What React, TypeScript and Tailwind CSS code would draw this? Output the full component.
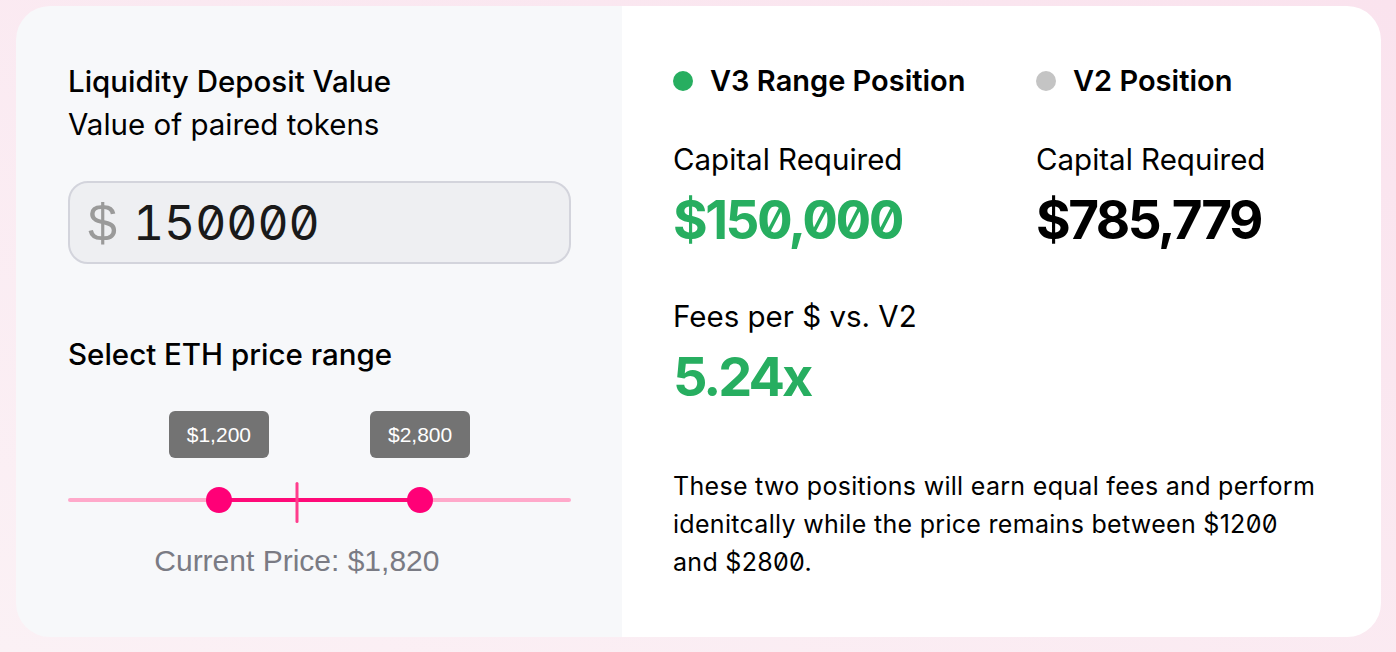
import { useState } from 'react';

const MIN = 0;
const MAX = 4000;

const pct = (v: number) => ((v - MIN) / (MAX - MIN)) * 100;

function fmt(n: number) {
  return '$' + n.toLocaleString('en-US');
}

function RangeSlider({ low, high, current }: { low: number; high: number; current: number }) {
  return (
    <div className="relative w-[503px] h-[170px]">
      {/* tooltips */}
      {[low, high].map(v => (
        <div
          key={v}
          className="absolute top-0 -translate-x-1/2 w-[100px] h-[47px] rounded-[6px] bg-[#737373] text-white flex items-center justify-center text-[21px] font-['Liberation_Sans',sans-serif]"
          style={{ left: `${pct(v)}%` }}
        >
          {fmt(v)}
        </div>
      ))}

      {/* track */}
      <div className="absolute left-0 right-0 top-[87px] h-[4px] rounded-full bg-[#ffa9ca]" />
      <div
        className="absolute top-[87px] h-[4px] bg-[#ff0a78]"
        style={{ left: `${pct(low)}%`, width: `${pct(high) - pct(low)}%` }}
      />
      {/* current price tick */}
      <div
        className="absolute top-[71px] h-[41px] w-[3px] -translate-x-1/2 rounded-full bg-[#ff3d8c]"
        style={{ left: `${pct(current)}%` }}
      />
      {/* thumbs */}
      {[low, high].map(v => (
        <div
          key={v}
          className="absolute top-[76px] w-[26px] h-[26px] -translate-x-1/2 rounded-full bg-[#ff0077]"
          style={{ left: `${pct(v)}%` }}
        />
      ))}

      <div
        className="absolute top-[133px] -translate-x-1/2 whitespace-nowrap text-[30px] leading-[34px] text-[#7a7b84] font-['Liberation_Sans',sans-serif]"
        style={{ left: `${pct(current)}%` }}
      >
        Current Price: {fmt(current)}
      </div>
    </div>
  );
}

export default function App() {
  const [value, setValue] = useState('150000');
  const low = 1200;
  const high = 2800;
  const current = 1820;

  return (
    <div className="w-[1396px] h-[652px] bg-gradient-to-tr from-[#fbf1f5] to-[#fae3ee] pt-[6px] pl-[16px] font-['Inter',sans-serif] text-black">
      <div className="w-[1365px] h-[631px] rounded-[34px] overflow-hidden flex">
        {/* left */}
        <div className="w-[606px] shrink-0 bg-[#f7f8fa] pl-[52px] pt-[54px]">
          <h2 className="text-[29.5px] leading-[43px] font-medium">Liquidity Deposit Value</h2>
          <p className="text-[29.5px] leading-[43px]">Value of paired tokens</p>

          <div className="mt-[35px] w-[503px] h-[83px] rounded-[20px] border-2 border-[#d3d4dc] bg-[#eeeff2] flex items-center pl-[18px]">
            <span className="text-[52px] leading-none text-[#9a9a9a] font-['Liberation_Sans',sans-serif]">$</span>
            <input
              value={value}
              onChange={e => setValue(e.target.value)}
              className="ml-[16px] w-[380px] bg-transparent outline-none text-[48px] text-[#1a1a1a] slashed-zero tabular-nums font-['Inter',sans-serif]"
            />
          </div>

          <h2 className="mt-[69px] text-[29.5px] leading-[43px] font-medium">Select ETH price range</h2>

          <div className="mt-[35px]">
            <RangeSlider low={low} high={high} current={current} />
          </div>
        </div>

        {/* right */}
        <div className="flex-1 min-w-0 bg-white pl-[51px] pt-[55px]">
          <div className="grid grid-cols-[363px_1fr]">
            <div>
              <div className="flex items-center gap-[17px]">
                <span className="w-[20px] h-[20px] rounded-full bg-[#27ae60]" />
                <span className="text-[29px] leading-[40px] font-semibold">V3 Range Position</span>
              </div>
              <div className="mt-[38px] text-[29.5px] leading-[40px]">Capital Required</div>
              <div className="mt-[11px] text-[53px] leading-[60px] font-bold text-[#27ae60] slashed-zero tracking-[-2.5px]">
                $150,000
              </div>
            </div>
            <div>
              <div className="flex items-center gap-[17px]">
                <span className="w-[20px] h-[20px] rounded-full bg-[#c4c4c4]" />
                <span className="text-[29px] leading-[40px] font-semibold">V2 Position</span>
              </div>
              <div className="mt-[38px] text-[29.5px] leading-[40px]">Capital Required</div>
              <div className="mt-[11px] text-[53px] leading-[60px] font-bold slashed-zero tracking-[-2.5px]">
                $785,779
              </div>
            </div>
          </div>

          <div className="mt-[46px] text-[29.5px] leading-[40px]">Fees per $ vs. V2</div>
          <div className="mt-[11px] text-[54px] leading-[60px] font-bold text-[#27ae60] tracking-[-3px]">5.24x</div>

          <p className="mt-[60px] w-[648px] text-[25px] leading-[38px] tracking-[0.3px] slashed-zero">
            These two positions will earn equal fees and perform idenitcally while the price remains between $1200 and $2800.
          </p>
        </div>
      </div>
    </div>
  );
}
